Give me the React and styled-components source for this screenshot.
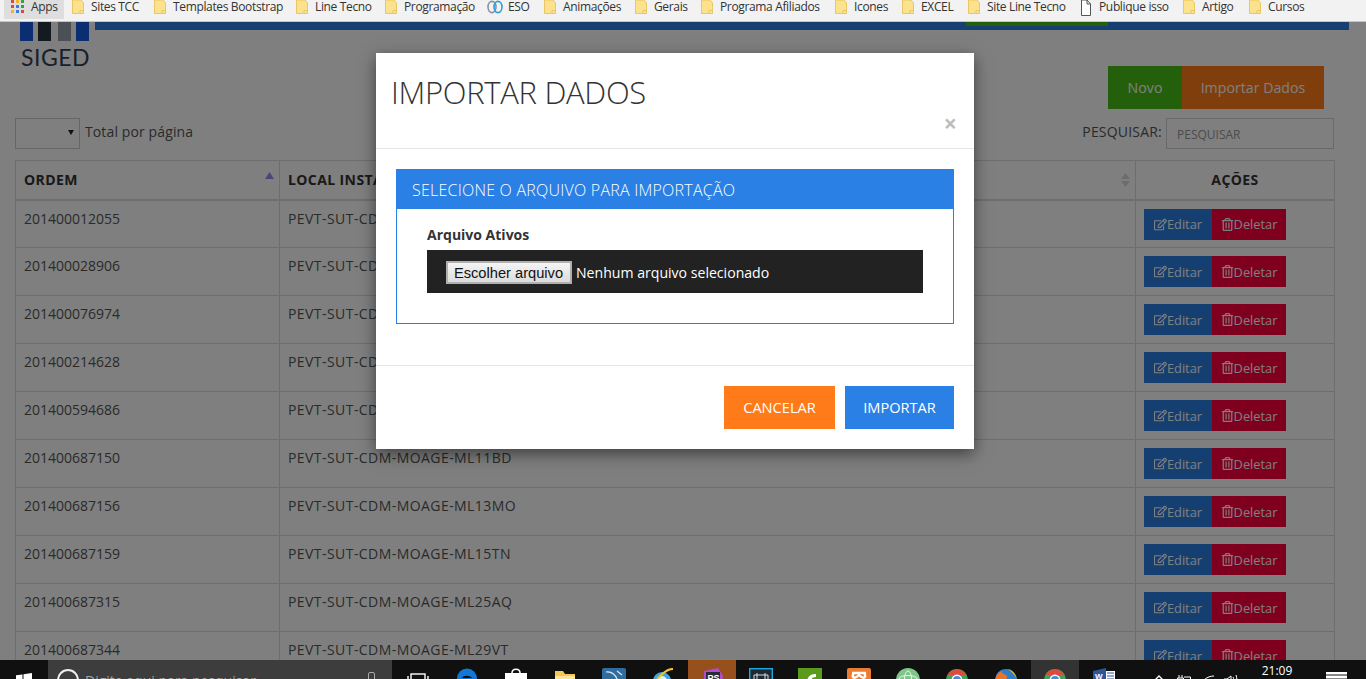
import React from "react";
import styled, { createGlobalStyle } from "styled-components";
import { FaRegEdit, FaRegTrashAlt } from "react-icons/fa";

const GlobalStyle = createGlobalStyle`
  html, body { margin: 0; padding: 0; height: 100%; overflow: hidden; background: #fff; }
  * { box-sizing: border-box; }
  body { font-family: "Open Sans", "Liberation Sans", sans-serif; }
`;

const Screen = styled.div`
  width: 1366px;
  height: 679px;
  display: flex;
  flex-direction: column;
  overflow: hidden;
`;

/* chrome bookmarks */
const BookmarkBar = styled.div`
  height: 22px;
  flex: none;
  display: flex;
  align-items: flex-start;
  background: #f2f2f2;
  border-bottom: 1px solid #c6c6c6;
  padding-left: 4px;
  overflow: hidden;
`;
const Bookmark = styled.div`
  width: ${(p) => p.$w}px;
  margin-right: ${(p) => p.$after ?? 0}px;
  flex: none;
  height: 19px;
  display: flex;
  align-items: flex-start;
  gap: ${(p) => p.$gap ?? 7}px;
  padding-left: ${(p) => p.$pad ?? 0}px;
  font-size: 12px;
  letter-spacing: -0.35px;
  line-height: 14px;
  color: #333;
  white-space: nowrap;
  background: ${(p) => (p.$active ? "#dedede" : "transparent")};
`;

const FolderIcon = () => (
  <svg width="12" height="14" viewBox="0 0 12 14" style={{ flex: "none" }}>
    <path d="M.5 0v13.5h11V3L9 0z" fill="#fde28e" stroke="#e9c765" />
    <path d="M8 13.5v-3h3.5v3" fill="none" stroke="#e9c765" />
  </svg>
);
const AppsIcon = () => {
  const cols = ["#e0483e", "#f0b429", "#3f9c4a", "#3a7de0"];
  const dots = [0, 1, 2, 0, 3, 2, 1, 3, 0];
  return (
    <svg width="13" height="13" viewBox="0 0 13 13" style={{ flex: "none" }}>
      {dots.map((c, i) => (
        <rect key={i} x={(i % 3) * 5} y={Math.floor(i / 3) * 5} width="3" height="3" fill={cols[c]} />
      ))}
    </svg>
  );
};
const EsoIcon = () => (
  <svg width="16" height="14" viewBox="0 0 16 14" style={{ flex: "none" }}>
    <ellipse cx="5" cy="7" rx="4" ry="5.6" fill="none" stroke="#8a929c" strokeWidth="1.6" />
    <ellipse cx="11" cy="7" rx="4" ry="5.6" fill="none" stroke="#2a9fd8" strokeWidth="1.6" />
  </svg>
);
const PageIcon = () => (
  <svg width="12" height="16" viewBox="0 0 12 16" style={{ flex: "none" }}>
    <path d="M1.5 0v15.5h9V4L7 0zM7 0v4h3.5" fill="#fff" stroke="#555" />
  </svg>
);

const bookmarks = [
  { label: "Apps", w: 60, after: 8, icon: <AppsIcon />, active: true, pad: 7 },
  { label: "Sites TCC", w: 82, icon: <FolderIcon /> },
  { label: "Templates Bootstrap", w: 142, icon: <FolderIcon /> },
  { label: "Line Tecno", w: 89, icon: <FolderIcon /> },
  { label: "Programação", w: 102, icon: <FolderIcon /> },
  { label: "ESO", w: 57, icon: <EsoIcon />, gap: 5 },
  { label: "Animações", w: 91, icon: <FolderIcon /> },
  { label: "Gerais", w: 66, icon: <FolderIcon /> },
  { label: "Programa Afiliados", w: 134, icon: <FolderIcon /> },
  { label: "Icones", w: 67, icon: <FolderIcon /> },
  { label: "EXCEL", w: 66, icon: <FolderIcon /> },
  { label: "Site Line Tecno", w: 112, icon: <FolderIcon /> },
  { label: "Publique isso", w: 103, icon: <PageIcon /> },
  { label: "Artigo", w: 66, icon: <FolderIcon /> },
  { label: "Cursos", w: 60, icon: <FolderIcon /> },
];

/* page behind the modal */
const Page = styled.div`
  flex: 1;
  min-height: 0;
  position: relative;
  overflow: hidden;
  background: #fff;
`;
const PageInner = styled.div`
  width: 1350px;
  padding: 0 16px 0 15px;
`;
const TopRow = styled.div`
  height: 44px;
  display: flex;
  margin-right: -15px;
`;
const Logo = styled.div`
  width: 80px;
  padding-left: 5px;
  display: flex;
  flex-direction: column;
`;
const LogoMark = styled.svg`
  display: block;
  width: 70px;
  height: 19px;
  flex: none;
`;
const LogoText = styled.div`
  margin-top: 3px;
  padding-left: 1px;
  font-family: Lato, "Open Sans", sans-serif;
  font-size: 23px;
  line-height: 26px;
  color: #2e4356;
  letter-spacing: 0.5px;
  white-space: nowrap;
`;
const TopBar = styled.div`
  flex: 1;
  height: 8px;
  background: #2e80e2;
  padding-right: 241px;
  display: flex;
  justify-content: flex-end;
`;
const TopBarAccent = styled.div`
  width: 142px;
  height: 4px;
  background: #48be16;
`;
const Actions = styled.div`
  height: 43px;
  display: flex;
  justify-content: flex-end;
  padding-right: 10px;
`;
const ActionButton = styled.button`
  width: ${(p) => p.$w}px;
  border: 0;
  padding: 0;
  background: ${(p) => p.$bg};
  color: #fff;
  font: 14.2px "Open Sans", sans-serif;
`;
const Controls = styled.div`
  margin-top: 9px;
  height: 31px;
  display: flex;
  align-items: center;
  font-size: 14px;
  color: #555;
`;
const PageSize = styled.div`
  width: 65px;
  height: 31px;
  border: 1px solid #ccc;
  margin-right: 5px;
  display: flex;
  align-items: center;
  justify-content: flex-end;
  padding-right: 5px;
  &::after {
    content: "";
    margin-top: -2px;
    border-left: 3.5px solid transparent;
    border-right: 3.5px solid transparent;
    border-top: 5px solid #222;
  }
`;
const PageSizeLabel = styled.span`
  margin-top: -5px;
  letter-spacing: 0.12px;
`;
const SearchLabel = styled.label`
  margin-left: auto;
  margin-right: 4px;
  margin-top: -5px;
  letter-spacing: 0.2px;
`;
const SearchInput = styled.input`
  width: 168px;
  height: 31px;
  border: 1px solid #d2d2d2;
  background: transparent;
  padding: 2px 10px 0;
  font: 12px "Open Sans", sans-serif;
  &::placeholder { color: #999; opacity: 1; }
`;
const Table = styled.table`
  width: 1319px;
  margin-top: 11px;
  border-collapse: collapse;
  table-layout: fixed;
  font-size: 14px;
  color: #555;
`;
const Th = styled.th`
  position: relative;
  height: 39px;
  padding: 0 8px;
  width: ${(p) => p.$w}px;
  text-align: ${(p) => p.$align || "left"};
  font-weight: 700;
  letter-spacing: 0.4px;
  color: #333;
  background: #fefefe;
  border: 1px solid #ddd;
  border-bottom: 2px solid #ddd;
`;
const SortMark = styled.svg`
  position: absolute;
  right: 5px;
  top: ${(p) => p.$top}px;
`;
const Td = styled.td`
  height: 48px;
  padding: 8px 8px 0;
  line-height: 20px;
  vertical-align: top;
  letter-spacing: ${(p) => p.$spacing ?? 0}px;
  border: 1px solid #ddd;
`;
const RowButtons = styled.div`
  display: flex;
`;
const RowButton = styled.button`
  width: ${(p) => p.$w}px;
  height: 31px;
  border: 0;
  padding: 0;
  display: flex;
  align-items: center;
  justify-content: center;
  background: ${(p) => p.$bg};
  color: #fff;
  font: 12.8px "Open Sans", sans-serif;
  svg { width: 13px; height: 13px; flex: none; }
`;

const rows = [
  ["201400012055", "PEVT-SUT-CDM-MOAGE-ML01BD"],
  ["201400028906", "PEVT-SUT-CDM-MOAGE-ML03BD"],
  ["201400076974", "PEVT-SUT-CDM-MOAGE-ML05BD"],
  ["201400214628", "PEVT-SUT-CDM-MOAGE-ML07BD"],
  ["201400594686", "PEVT-SUT-CDM-MOAGE-ML09BD"],
  ["201400687150", "PEVT-SUT-CDM-MOAGE-ML11BD"],
  ["201400687156", "PEVT-SUT-CDM-MOAGE-ML13MO"],
  ["201400687159", "PEVT-SUT-CDM-MOAGE-ML15TN"],
  ["201400687315", "PEVT-SUT-CDM-MOAGE-ML25AQ"],
  ["201400687344", "PEVT-SUT-CDM-MOAGE-ML29VT"],
];

/* modal */
const Overlay = styled.div`
  position: absolute;
  inset: 0;
  background: rgba(0, 0, 0, 0.5);
  padding: 31px 0 0 376px;
`;
const Modal = styled.div`
  width: 598px;
  height: 396px;
  background: #fff;
  box-shadow: 0 5px 15px rgba(0, 0, 0, 0.5);
  display: flex;
  flex-direction: column;
`;
const ModalHeader = styled.div`
  height: 96px;
  flex: none;
  padding: 15px 17px 0 15px;
  border-bottom: 1px solid #e5e5e5;
  display: flex;
  justify-content: space-between;
`;
const ModalTitle = styled.h2`
  margin: 0;
  font-size: 31px;
  letter-spacing: -0.3px;
  line-height: 48px;
  font-weight: 300;
  color: #333;
`;
const CloseMark = styled.span`
  margin-top: 43px;
  font-size: 23px;
  line-height: 24px;
  font-weight: 700;
  color: #bdbdbd;
`;
const ModalBody = styled.div`
  flex: 1;
  padding: 20px;
`;
const UploadPanel = styled.section`
  height: 155px;
  border: 1px solid #2a80e4;
`;
const UploadTitle = styled.h3`
  margin: -1px -1px 0;
  height: 40px;
  padding-left: 16px;
  background: #2a80e4;
  color: #fff;
  font-size: 16px;
  letter-spacing: 0.23px;
  font-weight: 300;
  line-height: 42px;
`;
const UploadContent = styled.div`
  padding: 16px 30px 0;
`;
const FieldLabel = styled.div`
  font-size: 14px;
  line-height: 20px;
  font-weight: 700;
  color: #333;
  margin-bottom: 5px;
`;
const FileField = styled.div`
  height: 43px;
  background: #222;
  display: flex;
  align-items: center;
  padding: 2px 0 0 19px;
  gap: 4px;
  color: #fff;
  font-size: 14.1px;
`;
const FileButton = styled.button`
  width: 126px;
  height: 23px;
  padding: 0 1px 0 0;
  border: 2px solid #b0b0b0;
  background: linear-gradient(#f4f4f4, #dcdcdc);
  color: #111;
  font: 14.67px "Liberation Sans", Arial, sans-serif;
`;
const ModalFooter = styled.div`
  height: 84px;
  flex: none;
  padding: 20px;
  border-top: 1px solid #e5e5e5;
  display: flex;
  justify-content: flex-end;
  gap: 10px;
`;
const FooterButton = styled.button`
  width: ${(p) => p.$w}px;
  height: 43px;
  border: 0;
  padding: 0 0 2px;
  background: ${(p) => p.$bg};
  color: #fff;
  font: 14.6px "Open Sans", sans-serif;
`;

/* windows taskbar, cut by the bottom of the window */
const Taskbar = styled.div`
  height: 19px;
  flex: none;
  display: flex;
  background: #101010;
  overflow: hidden;
`;
const StartCell = styled.div`
  width: 48px;
  flex: none;
  padding: 12px 0 0 16px;
`;
const SearchBox = styled.div`
  width: 344px;
  flex: none;
  background: #3d3d3d;
  display: flex;
  padding-left: 9px;
  color: #a5a5a5;
  font-size: 14px;
`;
const SearchRing = styled.div`
  width: 22px;
  height: 22px;
  flex: none;
  margin-top: 9px;
  border: 2px solid #eee;
  border-radius: 50%;
`;
const SearchHint = styled.span`
  margin: 11px 0 0 6px;
  line-height: 20px;
  white-space: nowrap;
`;
const MicMark = styled.div`
  width: 7px;
  height: 14px;
  margin: 12px 17px 0 auto;
  border: 1px solid #aaa;
  border-radius: 2px;
`;
const TaskRow = styled.div`
  flex: none;
  display: flex;
  gap: 1px;
  padding-left: 2px;
  padding-right: 19px;
`;
const TaskCell = styled.div`
  width: 48px;
  flex: none;
  display: flex;
  justify-content: center;
  padding-top: 8px;
  background: ${(p) => p.$bg || "transparent"};
  svg { display: block; flex: none; }
`;
const TrayCell = styled.div`
  width: ${(p) => p.$w}px;
  flex: none;
  display: flex;
  justify-content: center;
  padding-top: ${(p) => p.$top ?? 15}px;
  color: #fff;
  font-size: 12px;
  line-height: 14px;
`;

function ChromeMark() {
  return (
    <g>
      <circle cx="12" cy="12" r="11" fill="#3aa655" />
      <path d="M2.5 7a11 11 0 0 1 19 0H12z" fill="#dd4b3e" />
      <circle cx="12" cy="12" r="5.4" fill="#fff" />
      <circle cx="12" cy="12" r="4" fill="#4a89dc" />
    </g>
  );
}

const taskIcons = [
  { key: "view", top: 5, node: <g fill="none" stroke="#fff" strokeWidth="1.4"><rect x="5" y="1" width="14" height="12" /><path d="M2 3v8M22 3v8" /></g> },
  { key: "edge", node: <g><circle cx="12" cy="10.500" r="10" fill="#1178d8" /><path d="M7 10c1-3 8-3 10 0z" fill="#101010" /></g> },
  { key: "store", node: <g><path d="M8 5C8 0 16 0 16 5" fill="none" stroke="#fff" strokeWidth="1.5" /><path d="M1 5h22v19H1z" fill="#fff" /></g> },
  { key: "folder", top: 3, node: <g><path d="M2 0h8l2 3h10v18H2z" fill="#f5c94f" /><path d="M2 5h20v16H2z" fill="#fde29a" /></g> },
  { key: "mysql", node: <g><rect width="24" height="24" rx="2" fill="#2f6c9f" /><path d="M4 4c7-1 11 4 13 13M15 3l5 4" fill="none" stroke="#dfe8ef" strokeWidth="1.2" /></g> },
  { key: "ie", node: <g><circle cx="11" cy="13" r="9" fill="#3fa8e0" /><circle cx="11" cy="13" r="5" fill="#dff1fb" /><path d="M2 20C6 8 16 1 22 1" fill="none" stroke="#f2c230" strokeWidth="2.2" /></g> },
  { key: "ps", bg: "#97501c", node: <g><path d="M4 3l14-3 5 8-3 14H4z" fill="#b44ad8" /><rect x="6" y="4" width="14" height="14" fill="#2a2a35" /><text x="7.500" y="12.500" fontSize="9" fontWeight="700" fill="#fff" fontFamily="Liberation Sans">PS</text></g> },
  { key: "film", node: <g><rect x=".7" y=".7" width="22.6" height="22.6" fill="#1c2a34" stroke="#22a6df" strokeWidth="1.4" /><path d="M5 7h14v7H5z" fill="none" stroke="#ddd" /><path d="M8 5v11M16 5v11" stroke="#ddd" /></g> },
  { key: "green", node: <g><rect width="24" height="24" fill="#5a9a1c" /><path d="M9 14c0-5 3-8 9-8v3c-4 0-5 2-5 5v9H9z" fill="#fff" /></g> },
  { key: "orange", node: <g><rect width="24" height="24" rx="2" fill="#ea7d32" /><path d="M5 5h14M7 5c-3 4 0 7 5 2 5 5 8 2 5-2" fill="none" stroke="#fff" strokeWidth="2.4" /></g> },
  { key: "atom", node: <g><circle cx="12" cy="12" r="12" fill="#7dc78a" /><g fill="none" stroke="#e8f5ea" strokeWidth="1"><ellipse cx="12" cy="11" rx="9" ry="3.500" /><ellipse cx="12" cy="11" rx="3.500" ry="8" /></g></g> },
  { key: "chrome", node: <ChromeMark /> },
  { key: "firefox", node: <g><circle cx="12" cy="12" r="11" fill="#2f7fc8" /><path d="M1 15C1 8 4 4 8 3c-1 3 3 3 5 5 1 3-2 4-5 4z" fill="#e8742a" /><path d="M14 1c4 1 8 5 9 10-2-4-5-7-9-10z" fill="#f5b82e" /></g> },
  { key: "chrome2", bg: "#333", node: <ChromeMark /> },
  { key: "word", node: <g><path d="M1 3l13-3v24L1 21z" fill="#2b579a" /><rect x="14" y="3" width="9" height="18" fill="#fff" /><path d="M15 5h7M15 8h7M15 11h7" stroke="#2b579a" /><text x="3" y="11" fontSize="8" fontWeight="700" fill="#fff" fontFamily="Liberation Sans">W</text></g> },
];

export default function App() {
  return (
    <Screen>
      <GlobalStyle />
      <BookmarkBar>
        {bookmarks.map((b) => (
          <Bookmark key={b.label} $w={b.w} $after={b.after} $gap={b.gap} $pad={b.pad} $active={b.active}>
            {b.icon}
            <span>{b.label}</span>
          </Bookmark>
        ))}
      </BookmarkBar>

      <Page>
        <PageInner>
          <TopRow>
            <Logo>
              <LogoMark viewBox="0 0 70 19">
                <rect x="0" width="13" height="19" fill="#165ae4" />
                <rect x="18" width="13" height="19" fill="#263440" />
                <rect x="38" width="13" height="19" fill="#989ea6" />
                <rect x="56" width="13" height="19" fill="#165ae4" />
              </LogoMark>
              <LogoText>SIGED</LogoText>
            </Logo>
            <TopBar>
              <TopBarAccent />
            </TopBar>
          </TopRow>

          <Actions>
            <ActionButton $w={74} $bg="#48be16">Novo</ActionButton>
            <ActionButton $w={142} $bg="#ff7c18">Importar Dados</ActionButton>
          </Actions>

          <Controls>
            <PageSize />
            <PageSizeLabel>Total por página</PageSizeLabel>
            <SearchLabel>PESQUISAR:</SearchLabel>
            <SearchInput placeholder="PESQUISAR" />
          </Controls>

          <Table>
            <thead>
              <tr>
                <Th $w={264}>
                  ORDEM
                  <SortMark $top={11} width="9" height="7" viewBox="0 0 9 7">
                    <path d="M0 7L4.500 0 9 7z" fill="#8f8ff0" />
                  </SortMark>
                </Th>
                <Th $w={856}>
                  LOCAL INSTALAÇÃO
                  <SortMark $top={12} width="9" height="14" viewBox="0 0 9 14">
                    <path d="M0 6L4.500 0 9 6zM0 8h9l-4.500 6z" fill="#dadada" />
                  </SortMark>
                </Th>
                <Th $w={199} $align="center">AÇÕES</Th>
              </tr>
            </thead>
            <tbody>
              {rows.map(([ordem, local]) => (
                <tr key={ordem}>
                  <Td>{ordem}</Td>
                  <Td $spacing={0.44}>{local}</Td>
                  <Td>
                    <RowButtons>
                      <RowButton $w={68} $bg="#2a7fe0"><FaRegEdit />Editar</RowButton>
                      <RowButton $w={74} $bg="#ff003c"><FaRegTrashAlt />Deletar</RowButton>
                    </RowButtons>
                  </Td>
                </tr>
              ))}
            </tbody>
          </Table>
        </PageInner>

        <Overlay>
          <Modal>
            <ModalHeader>
              <ModalTitle>IMPORTAR DADOS</ModalTitle>
              <CloseMark>×</CloseMark>
            </ModalHeader>
            <ModalBody>
              <UploadPanel>
                <UploadTitle>SELECIONE O ARQUIVO PARA IMPORTAÇÃO</UploadTitle>
                <UploadContent>
                  <FieldLabel>Arquivo Ativos</FieldLabel>
                  <FileField>
                    <FileButton>Escolher arquivo</FileButton>
                    <span>Nenhum arquivo selecionado</span>
                  </FileField>
                </UploadContent>
              </UploadPanel>
            </ModalBody>
            <ModalFooter>
              <FooterButton $w={111} $bg="#ff7a18">CANCELAR</FooterButton>
              <FooterButton $w={109} $bg="#2a80e4">IMPORTAR</FooterButton>
            </ModalFooter>
          </Modal>
        </Overlay>
      </Page>

      <Taskbar>
        <StartCell>
          <svg width="16" height="16" viewBox="0 0 16 16">
            <path d="M0 2.300l6.500-.9v6.200H0zM7.500 1.300L16 0v7.600H7.500zM0 8.500h6.500v6.200L0 13.800zM7.500 8.500H16V16l-8.500-1.200z" fill="#fff" />
          </svg>
        </StartCell>
        <SearchBox>
          <SearchRing />
          <SearchHint>Digite aqui para pesquisar</SearchHint>
          <MicMark />
        </SearchBox>
        <TaskRow>
          {taskIcons.map((t) => (
            <TaskCell key={t.key} $bg={t.bg}>
              <svg width="24" height="24" viewBox="0 0 24 24" style={t.top ? { marginTop: t.top } : undefined}>
                {t.node}
              </svg>
            </TaskCell>
          ))}
        </TaskRow>
        <TrayCell $w={24}>
          <svg width="10" height="6" viewBox="0 0 10 6"><path d="M1 5l4-4 4 4" fill="none" stroke="#fff" strokeWidth="1.3" /></svg>
        </TrayCell>
        <TrayCell $w={24}>
          <svg width="15" height="10" viewBox="0 0 15 10"><path d="M3 0v3M6 0v3M1.500 3h6v5h-6zM8 2h6.500v7H4" fill="none" stroke="#fff" /></svg>
        </TrayCell>
        <TrayCell $w={27}>
          <svg width="12" height="10" viewBox="0 0 12 10"><path d="M1 5c3-3 7-4 10-4M4 8c2-2 4-3 7-3" fill="none" stroke="#fff" /></svg>
        </TrayCell>
        <TrayCell $w={18}>
          <svg width="16" height="10" viewBox="0 0 16 10"><path d="M1 4h3l4-3v9M10 2c1 2 1 4 1 6M13 0c1 3 1 6 1 9" fill="none" stroke="#fff" /></svg>
        </TrayCell>
        <TrayCell $w={74} $top={4}>21:09</TrayCell>
        <TrayCell $w={44} $top={12}>
          <svg width="21" height="10" viewBox="0 0 21 10"><path d="M0 0h21v10H0z" fill="#fff" /><path d="M0 3h21M0 7h21" stroke="#101010" /></svg>
        </TrayCell>
      </Taskbar>
    </Screen>
  );
}
